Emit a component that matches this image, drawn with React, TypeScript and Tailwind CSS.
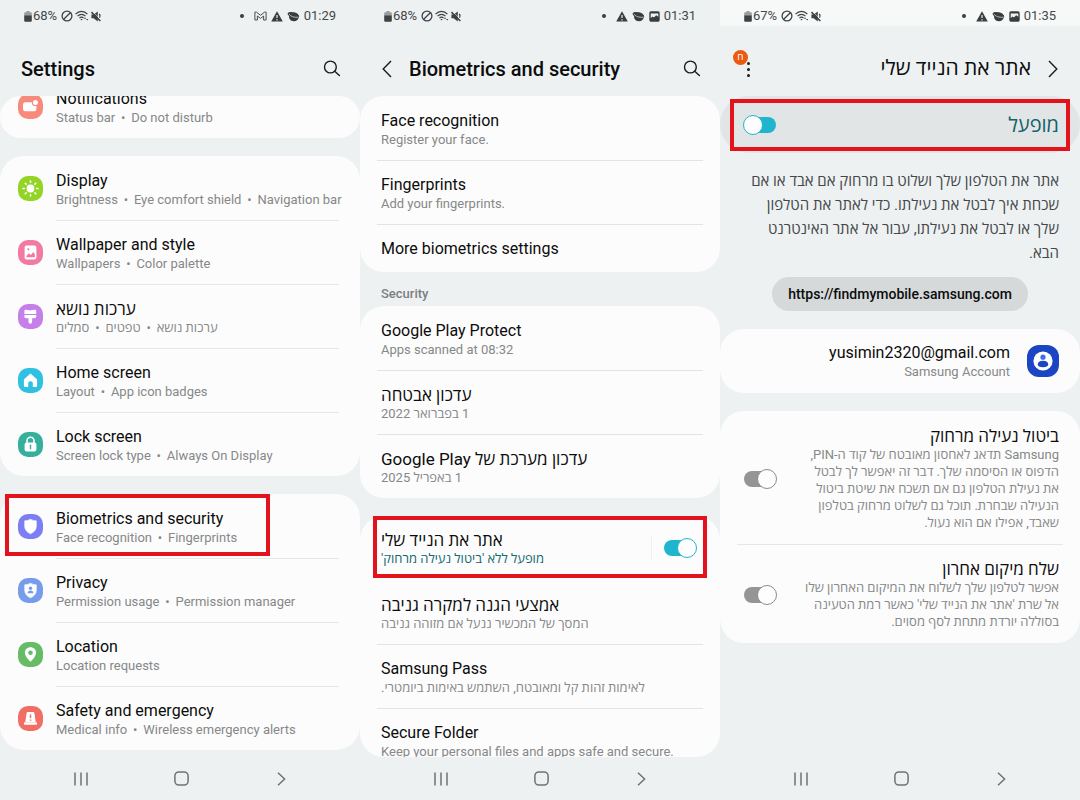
import type { ReactNode } from "react";
import clsx from "clsx";

interface RowData {
  title: string;
  sub?: string[];
}

interface IconRowData extends RowData {
  icon: ReactNode;
  color: string;
  highlighted?: boolean;
}

/* ---------- status bar icons ---------- */

const BatteryIcon = () => (
  <svg width="8" height="11" viewBox="0 0 8 11">
    <path d="M2.5 0h3v1.2H7a.8.8 0 0 1 .8.8v3H.2V2a.8.8 0 0 1 .8-.8h1.5z" fill="#9a9da0" />
    <path d="M.2 4.4h7.6v5.4a1 1 0 0 1-1 1H1.2a1 1 0 0 1-1-1z" fill="#3f4244" />
  </svg>
);

const BlockIcon = () => (
  <svg width="12" height="12" viewBox="0 0 12 12" fill="none" stroke="#3f4244" strokeWidth="1.3">
    <circle cx="6" cy="6" r="4.9" />
    <path d="M2.7 9.3l6.6-6.6" />
  </svg>
);

const WifiIcon = () => (
  <svg width="14" height="12" viewBox="0 0 14 12" fill="none" stroke="#3f4244" strokeWidth="1.2">
    <path d="M.6 4.2C3.8.5 9.2.5 12.4 4.2" />
    <path d="M2.6 6.2c2.1-2.4 5.7-2.4 7.8 0" />
    <path d="M4.5 8.1c1.1-1.3 2.9-1.3 4 0" />
    <path d="M5.3 9.1h2.4L6.5 10.6z" fill="#3f4244" stroke="none" />
    <path d="M10 7.2l1.2 1.6H8.9zM12.2 10.6L11 9h2.3z" fill="#3f4244" stroke="none" />
  </svg>
);

const MuteIcon = () => (
  <svg width="10" height="11" viewBox="0 0 10 11">
    <path d="M.4 3.6h2.2L6.8.4v10L2.6 7.2H.4z" fill="#3f4244" />
    <path d="M8.2 3c.9 1 .9 2.6.2 3.6" fill="none" stroke="#3f4244" strokeWidth="1.2" />
    <path d="M.4 1l9 9" stroke="#3f4244" strokeWidth="1.6" />
    <path d="M1.8.6l8 8" stroke="#edf1f2" strokeWidth=".6" />
  </svg>
);

const MailIcon = () => (
  <svg width="13" height="10" viewBox="0 0 13 10" fill="none" stroke="#4a4d50" strokeWidth="1">
    <path d="M.9 9V1.1h1.5l4.1 3.2 4.1-3.2h1.5V9H9.6V5L6.5 7.4 3.4 5v4z" strokeLinejoin="round" />
  </svg>
);

const WarningIcon = () => (
  <svg width="12" height="11" viewBox="0 0 12 11">
    <path d="M6 .3L11.8 10.6H.2z" fill="#3a3d3f" />
    <path d="M6 3.9v3.2M6 8.2v1.3" stroke="#edf1f2" strokeWidth="1.2" />
  </svg>
);

const PlanetIcon = () => (
  <svg width="13" height="11" viewBox="0 0 13 11">
    <ellipse cx="6.9" cy="5.8" rx="4.9" ry="4.4" fill="#3a3d3f" />
    <ellipse cx="6.4" cy="4.1" rx="6" ry="2.7" transform="rotate(16 6.4 4.1)" fill="#3a3d3f" />
    <path d="M2.2 2.9c.4 2.2 5.4 4 9.3 3.2" fill="none" stroke="#edf1f2" strokeWidth=".7" />
  </svg>
);

const PictureIcon = () => (
  <svg width="11" height="11" viewBox="0 0 11 11">
    <rect x=".3" y=".3" width="10.4" height="10.4" rx="1.6" fill="#3a3d3f" />
    <path d="M1.7 2.6h7.6v3.1L7.2 4.3 4.9 6.4 3.6 5.5 1.7 7z" fill="#edf1f2" />
  </svg>
);

/* ---------- settings list icons, drawn on a 25px tile ---------- */

const NotificationsIcon = () => (
  <>
    <rect x="5" y="8.3" width="13.4" height="9" rx="2.2" fill="#fff" />
    <circle cx="17.4" cy="8.4" r="3.6" fill="#f88a7c" />
    <circle cx="17.4" cy="8.4" r="2.5" fill="#fff" />
  </>
);

const DisplayIcon = () => (
  <>
    <circle cx="12.5" cy="12.5" r="3.9" fill="#fff" />
    {[0, 45, 90, 135, 180, 225, 270, 315].map((a) => (
      <path
        key={a}
        d="M12.5 5v1.3"
        stroke="#fff"
        strokeWidth="1.5"
        strokeLinecap="round"
        transform={`rotate(${a} 12.5 12.5)`}
      />
    ))}
  </>
);

const WallpaperIcon = () => (
  <>
    <rect x="6.6" y="5.6" width="11.8" height="13.8" rx="2" fill="#fff" />
    <path d="M8.3 16.2l2.6-3 2 1.9 2.3-3 1.6 2v3.2H8.3z" fill="#f279a2" />
    <circle cx="10.3" cy="9.3" r="1.1" fill="#f279a2" />
  </>
);

const ThemesIcon = () => (
  <>
    <path d="M6.4 6.2c2.4-1.2 4.4.7 6.6.1 1.8-.5 3.3-.9 5.2-.4v4H6.4z" fill="#fff" />
    <path d="M6.4 11h11.8v1.6c0 1-.6 1.6-1.6 1.6h-2.5v3.7a1.8 1.8 0 0 1-3.6 0v-3.7H8c-1 0-1.6-.6-1.6-1.6z" fill="#fff" />
  </>
);

const HomeIcon = () => (
  <path
    d="M12.5 5.6l6.2 5.5c.3.3.4.6.4.9v5.7c0 .8-.5 1.3-1.3 1.3h-3v-3.8c0-1.1-.9-1.9-2.3-1.9s-2.3.8-2.3 1.9V19h-3c-.8 0-1.3-.5-1.3-1.3V12c0-.3.1-.6.4-.9z"
    fill="#fff"
  />
);

const LockIcon = () => (
  <>
    <path d="M9 11V8.8a3.5 3.5 0 0 1 7 0V11" fill="none" stroke="#fff" strokeWidth="1.6" />
    <rect x="6.6" y="10.4" width="11.8" height="9.2" rx="2" fill="#fff" />
    <path d="M12.5 13.3v3.4" stroke="#35b09c" strokeWidth="1.4" strokeLinecap="round" />
  </>
);

const SHIELD = "M12.5 5.2c1.7 1 3.6 1.5 5.8 1.6v5.6c0 3.4-2.3 5.8-5.8 7.4-3.5-1.6-5.8-4-5.8-7.4V6.8c2.2-.1 4.1-.6 5.8-1.6z";

const ShieldIcon = () => <path d={SHIELD} fill="#fff" stroke="#fff" strokeWidth=".6" strokeLinejoin="round" />;

const PrivacyIcon = () => (
  <>
    <ShieldIcon />
    <circle cx="12.5" cy="10.2" r="1.7" fill="#769ceb" />
    <path d="M9.6 15.2c0-1.7 1.1-2.6 2.9-2.6s2.9.9 2.9 2.6z" fill="#769ceb" />
  </>
);

const LocationIcon = () => (
  <>
    <path d="M12.5 5.2c3.2 0 5.6 2.3 5.6 5.3 0 3.4-3 6.5-5 8.7-.3.4-.9.4-1.2 0-2-2.2-5-5.3-5-8.7 0-3 2.4-5.3 5.6-5.3z" fill="#fff" />
    <circle cx="12.5" cy="10.8" r="2.3" fill="#66bb66" />
  </>
);

const SafetyIcon = () => (
  <>
    <path d="M9.9 6h5.2c.7 0 1.2.4 1.3 1.1l1.3 8.9H7.3l1.3-8.9C8.7 6.4 9.2 6 9.9 6z" fill="#fff" />
    <rect x="6" y="16.2" width="13" height="2.5" rx=".6" fill="#fff" />
    <path d="M12.5 8.5v3.6M12.5 13.5v1.3" stroke="#f06e63" strokeWidth="1.5" />
  </>
);

/* ---------- header icons ---------- */

const SearchIcon = () => (
  <svg width="18" height="18" viewBox="0 0 18 18" fill="none" stroke="#1b1c1d" strokeWidth="1.4">
    <circle cx="7.4" cy="7" r="5.9" />
    <path d="M11.7 11.2l4.7 4.4" strokeLinecap="round" />
  </svg>
);

const BackIcon = () => (
  <svg width="10" height="18" viewBox="0 0 10 18" fill="none" stroke="#1b1c1d" strokeWidth="1.4">
    <path d="M9 1L1.2 9 9 17" />
  </svg>
);

/* ---------- data ---------- */

const displayRows: IconRowData[] = [
  { title: "Display", sub: ["Brightness", "Eye comfort shield", "Navigation bar"], icon: <DisplayIcon />, color: "bg-[#93d426]" },
  { title: "Wallpaper and style", sub: ["Wallpapers", "Color palette"], icon: <WallpaperIcon />, color: "bg-[#f279a2]" },
  { title: "ערכות נושא", sub: ["ערכות נושא", "טפטים", "סמלים"], icon: <ThemesIcon />, color: "bg-[#c57fe8]" },
  { title: "Home screen", sub: ["Layout", "App icon badges"], icon: <HomeIcon />, color: "bg-[#2fc1e2]" },
  { title: "Lock screen", sub: ["Screen lock type", "Always On Display"], icon: <LockIcon />, color: "bg-[#35b09c]" },
];

const securityRows: IconRowData[] = [
  { title: "Biometrics and security", sub: ["Face recognition", "Fingerprints"], icon: <ShieldIcon />, color: "bg-[#7a80f3]", highlighted: true },
  { title: "Privacy", sub: ["Permission usage", "Permission manager"], icon: <PrivacyIcon />, color: "bg-[#769ceb]" },
  { title: "Location", sub: ["Location requests"], icon: <LocationIcon />, color: "bg-[#66bb66]" },
  { title: "Safety and emergency", sub: ["Medical info", "Wireless emergency alerts"], icon: <SafetyIcon />, color: "bg-[#f06e63]" },
];

const biometricRows: RowData[] = [
  { title: "Face recognition", sub: ["Register your face."] },
  { title: "Fingerprints", sub: ["Add your fingerprints."] },
  { title: "More biometrics settings" },
];

const updateRows: RowData[] = [
  { title: "Google Play Protect", sub: ["Apps scanned at 08:32"] },
  { title: "עדכון אבטחה", sub: ["1 בפברואר 2022"] },
  { title: "עדכון מערכת של Google Play", sub: ["1 באפריל 2025"] },
];

const moreRows: RowData[] = [
  { title: "אמצעי הגנה למקרה גניבה", sub: ["המסך של המכשיר ננעל אם מזוהה גניבה"] },
  { title: "Samsung Pass", sub: ["לאימות זהות קל ומאובטח, השתמש באימות ביומטרי."] },
  { title: "Secure Folder", sub: ["Keep your personal files and apps safe and secure."] },
];

const remoteRows = [
  {
    id: "remote-unlock",
    title: "ביטול נעילה מרחוק",
    lines: [
      "Samsung תדאג לאחסון מאובטח של קוד ה-PIN,",
      "הדפוס או הסיסמה שלך. דבר זה יאפשר לך לבטל",
      "את נעילת הטלפון גם אם תשכח את שיטת ביטול",
      "הנעילה שבחרת. תוכל גם לשלוט מרחוק בטלפון",
      "שאבד, אפילו אם הוא נעול.",
    ],
  },
  {
    id: "last-location",
    title: "שלח מיקום אחרון",
    lines: [
      "אפשר לטלפון שלך לשלוח את המיקום האחרון שלו",
      "אל שרת 'אתר את הנייד שלי' כאשר רמת הטעינה",
      "בסוללה יורדת מתחת לסף מסוים.",
    ],
  },
];

const introLines = [
  "אתר את הטלפון שלך ושלוט בו מרחוק אם אבד או אם",
  "שכחת איך לבטל את נעילתו. כדי לאתר את הטלפון",
  "שלך או לבטל את נעילתו, עבור אל אתר האינטרנט",
  "הבא.",
];

const startsHebrew = (s: string) => /^[\u0590-\u05FF]/.test(s);

/* ---------- shared pieces ---------- */

function StatusBar({ battery, time, mail, light }: { battery: string; time: string; mail?: boolean; light?: boolean }) {
  return (
    <div
      dir="ltr"
      className={clsx(
        "flex h-[26px] shrink-0 items-center justify-between pt-1.5 pr-6 pl-6 text-[13px] leading-5 text-[#45484a]",
        light && "bg-[#f7f8f8]"
      )}
    >
      <div className="flex items-center">
        <BatteryIcon />
        <span className="mr-1 ml-px">{battery}</span>
        <span className="flex items-center gap-0.5">
          <BlockIcon />
          <WifiIcon />
          <MuteIcon />
        </span>
      </div>
      <div className="flex items-center gap-1">
        <span className="mr-1.5 size-1 rounded-full bg-[#3a3d3f]" />
        {mail && <MailIcon />}
        <WarningIcon />
        <PlanetIcon />
        {!mail && <PictureIcon />}
        <span>{time}</span>
      </div>
    </div>
  );
}

function NavBar() {
  return (
    <nav dir="ltr" className="grid h-[43px] shrink-0 grid-cols-3 pr-[29px] pl-[31px] text-[#6f7375]">
      <button aria-label="Recents" className="flex items-center justify-center">
        <svg width="14" height="14" viewBox="0 0 14 14" stroke="currentColor" strokeWidth="1.5">
          <path d="M1 .5v13M7 .5v13M13 .5v13" />
        </svg>
      </button>
      <button aria-label="Home" className="flex items-center justify-center">
        <svg width="15" height="15" viewBox="0 0 15 15" fill="none" stroke="currentColor" strokeWidth="1.5">
          <rect x=".9" y=".9" width="13.2" height="13.2" rx="4" />
        </svg>
      </button>
      <button aria-label="Back" className="flex items-center justify-center">
        <svg width="9" height="14" viewBox="0 0 9 14" fill="none" stroke="currentColor" strokeWidth="1.5">
          <path d="M1 .8L7.6 7 1 13.2" />
        </svg>
      </button>
    </nav>
  );
}

function Screen({ children, dir = "ltr" }: { children: ReactNode; dir?: "ltr" | "rtl" }) {
  return (
    <section dir={dir} className="flex h-screen min-w-0 flex-col overflow-hidden">
      {children}
      <NavBar />
    </section>
  );
}

function Card({ children, className }: { children: ReactNode; className?: string }) {
  return <div className={clsx("rounded-[24px] bg-[#fcfcfc]", className)}>{children}</div>;
}

function Highlight({ className }: { className: string }) {
  return <span className={clsx("pointer-events-none absolute border-4 border-[#e3131e]", className)} />;
}

function Switch({ id, on }: { id: string; on?: boolean }) {
  return (
    <input
      id={id}
      type="checkbox"
      role="switch"
      defaultChecked={on}
      className="relative h-4 w-[31px] shrink-0 appearance-none rounded-full bg-[#959595] before:absolute before:-start-0.5 before:-top-0.5 before:size-5 before:rounded-full before:border before:border-[#8c8c8c] before:bg-[#fdfdfd] checked:bg-[#1fb5cf] checked:before:start-auto checked:before:-end-0.5 checked:before:border-[#1fb5cf]"
    />
  );
}

function RowText({ title, sub }: RowData) {
  return (
    <>
      <span
        dir="auto"
        className={clsx(
          "block text-left leading-5 whitespace-nowrap text-[#0c0c0c]",
          startsHebrew(title) ? "text-[17px]" : "text-base"
        )}
      >
        {title}
      </span>
      {sub && (
        <span dir="auto" className="block text-left text-[13px] leading-[18px] whitespace-nowrap text-[#868889]">
          {sub.map((s, i) => (
            <span key={s}>
              {i > 0 && <span className="inline-block w-4 text-center">•</span>}
              {s}
            </span>
          ))}
        </span>
      )}
    </>
  );
}

function IconRow({ title, sub, icon, color, highlighted }: IconRowData) {
  return (
    <li className="group relative">
      <a href="#" className="flex h-16 items-center gap-[13px] pr-[21px] pl-[18px]">
        <span className={clsx("size-[25px] shrink-0 overflow-hidden rounded-[10px]", color)}>
          <svg width="25" height="25" viewBox="0 0 25 25">
            {icon}
          </svg>
        </span>
        <span className="h-16 min-w-0 flex-1 border-t border-[#e6e8e8] pt-3.5 group-first:border-transparent">
          <RowText title={title} sub={sub} />
        </span>
      </a>
      {highlighted && <Highlight className="top-0 right-[90px] left-[5px] h-[62px]" />}
    </li>
  );
}

function TextRow({ title, sub }: RowData) {
  return (
    <li className="mx-[17px] border-t border-[#e3e5e5] first:border-transparent">
      <a href="#" className={clsx("block px-1 pt-3.5", sub ? "h-[63px]" : "h-[47px]")}>
        <RowText title={title} sub={sub} />
      </a>
    </li>
  );
}

/* ---------- screens ---------- */

function SettingsScreen() {
  return (
    <Screen>
      <StatusBar battery="68%" time="01:29" mail />
      <header className="flex h-[70px] shrink-0 items-center justify-between pt-4 pr-[19px] pl-[21px]">
        <h1 className="text-xl font-medium text-[#0c0c0c]">Settings</h1>
        <button aria-label="Search">
          <SearchIcon />
        </button>
      </header>
      <main className="flex min-h-0 flex-1 flex-col gap-[18px] overflow-hidden">
        <Card className="flex h-[42px] shrink-0 flex-col justify-end overflow-hidden">
          <ul>
            <IconRow title="Notifications" sub={["Status bar", "Do not disturb"]} icon={<NotificationsIcon />} color="bg-[#f88a7c]" />
          </ul>
        </Card>
        <Card className="shrink-0">
          <ul>
            {displayRows.map((row) => (
              <IconRow key={row.title} {...row} />
            ))}
          </ul>
        </Card>
        <Card className="shrink-0">
          <ul>
            {securityRows.map((row) => (
              <IconRow key={row.title} {...row} />
            ))}
          </ul>
        </Card>
      </main>
    </Screen>
  );
}

function BiometricsScreen() {
  return (
    <Screen>
      <StatusBar battery="68%" time="01:31" />
      <header className="flex h-[70px] shrink-0 items-center pt-4 pr-[19px] pl-[22px]">
        <button aria-label="Back">
          <BackIcon />
        </button>
        <h1 className="ml-[17px] flex-1 truncate text-xl font-medium text-[#0c0c0c]">Biometrics and security</h1>
        <button aria-label="Search">
          <SearchIcon />
        </button>
      </header>
      <main className="flex min-h-0 flex-1 flex-col overflow-hidden">
        <Card className="shrink-0">
          <ul>
            {biometricRows.map((row) => (
              <TextRow key={row.title} {...row} />
            ))}
          </ul>
        </Card>
        <h2 className="h-[34px] shrink-0 px-[21px] pt-3 text-[13px] leading-5 font-medium text-[#7c7f81]">Security</h2>
        <Card className="shrink-0">
          <ul>
            {updateRows.map((row) => (
              <TextRow key={row.title} {...row} />
            ))}
          </ul>
        </Card>
        <Card className="mt-[18px] flex min-h-0 flex-1 flex-col">
          <div className="relative flex h-16 shrink-0 items-center justify-between pr-[25px] pl-[21px]">
            <label htmlFor="find-mobile" className="h-16 pt-3.5">
              <span dir="rtl" className="block text-left text-[17px] leading-5 text-[#0c0c0c]">
                אתר את הנייד שלי
              </span>
              <span dir="rtl" className="block text-left text-[13px] leading-[18px] text-[#116a70]">
                מופעל ללא 'ביטול נעילה מרחוק'
              </span>
            </label>
            <div className="flex h-6 items-center border-l border-[#f0f1f1] pl-3">
              <Switch id="find-mobile" on />
            </div>
            <Highlight className="inset-x-[13px] top-0 h-[62px]" />
          </div>
          <ul className="min-h-0 flex-1 overflow-hidden rounded-b-[24px]">
            {moreRows.map((row) => (
              <TextRow key={row.title} {...row} />
            ))}
          </ul>
        </Card>
      </main>
    </Screen>
  );
}

function FindMobileScreen() {
  return (
    <Screen dir="rtl">
      <StatusBar battery="67%" time="01:35" light />
      <header className="flex h-[70px] shrink-0 items-center px-[22px] pt-4">
        <button aria-label="חזרה">
          <span className="block rotate-180">
            <BackIcon />
          </span>
        </button>
        <h1 className="ms-[17px] flex-1 text-[21px] text-[#0c0c0c]">אתר את הנייד שלי</h1>
        <button aria-label="אפשרויות נוספות" className="relative flex w-3 flex-col items-center gap-[3px]">
          <span className="size-[3px] rounded-full bg-[#1b1c1d]" />
          <span className="size-[3px] rounded-full bg-[#1b1c1d]" />
          <span className="size-[3px] rounded-full bg-[#1b1c1d]" />
          <span className="absolute right-1.5 bottom-3 flex size-[15px] items-center justify-center rounded-full bg-[#ea5a10] text-[10px] leading-none text-white">
            ח
          </span>
        </button>
      </header>
      <main className="flex min-h-0 flex-1 flex-col overflow-hidden">
        <div className="relative flex h-[57px] shrink-0 items-center justify-between rounded-full bg-[#e2e5e5] ps-[21px] pe-[25px]">
          <label htmlFor="find-on" className="text-xl text-[#13616b]">
            מופעל
          </label>
          <Switch id="find-on" on />
          <Highlight className="inset-x-2.5 top-[3px] h-[52px]" />
        </div>
        <p className="px-[21px] pt-4 text-[15px] leading-6 text-[#44484a]">
          {introLines.map((line) => (
            <span key={line} className="block whitespace-nowrap">
              {line}
            </span>
          ))}
        </p>
        <a
          href="#"
          dir="ltr"
          className="mt-3 self-center rounded-full bg-[#d5d9da] px-4 py-1.5 text-sm leading-[22px] font-medium text-[#0c0c0c]"
        >
          https://findmymobile.samsung.com
        </a>
        <Card className="mt-[18px] flex h-16 shrink-0 items-center gap-[17px] px-[21px]">
          <svg width="32" height="32" viewBox="0 0 32 32" className="shrink-0">
            <rect width="32" height="32" rx="12" fill="#1c45c4" />
            <circle cx="16" cy="16" r="9.6" fill="#fff" />
            <circle cx="16" cy="12.2" r="2.6" fill="#3d70e8" />
            <path d="M10.8 19.2c0-2.2 2-3.4 5.2-3.4s5.2 1.2 5.2 3.4-2 3-5.2 3-5.2-.8-5.2-3z" fill="#1c45c4" />
          </svg>
          <div className="h-16 pt-3.5">
            <div className="text-base leading-5 text-[#0c0c0c]">yusimin2320@gmail.com</div>
            <div className="text-[13px] leading-[18px] text-[#868889]">Samsung Account</div>
          </div>
        </Card>
        <Card className="mt-[18px] shrink-0">
          {remoteRows.map((row) => (
            <div
              key={row.id}
              className="mx-[17px] flex items-center justify-between border-t border-[#e6e8e8] ps-1 pe-[7px] pt-3.5 pb-[13px] first:border-transparent"
            >
              <label htmlFor={row.id}>
                <span className="block text-[17px] leading-5 text-[#0c0c0c]">{row.title}</span>
                {row.lines.map((line) => (
                  <span key={line} className="block text-[13px] leading-[17px] whitespace-nowrap text-[#868889]">
                    {line}
                  </span>
                ))}
              </label>
              <Switch id={row.id} />
            </div>
          ))}
        </Card>
      </main>
    </Screen>
  );
}

export default function App() {
  return (
    <div className="grid min-h-screen grid-cols-3 bg-[#edf1f2] font-[Roboto,'Open_Sans',sans-serif]">
      <SettingsScreen />
      <BiometricsScreen />
      <FindMobileScreen />
    </div>
  );
}
